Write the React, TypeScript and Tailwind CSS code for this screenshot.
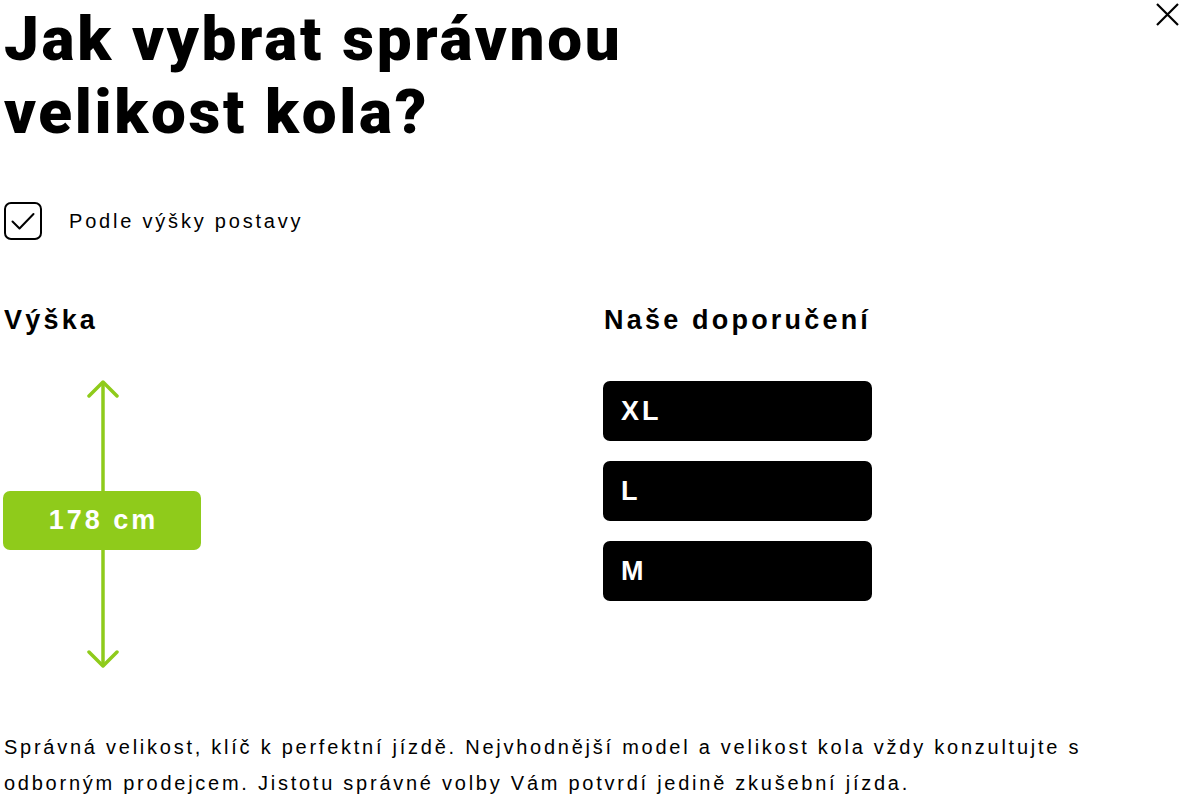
import React from "react";

export default function App() {
  return (
    <div className="relative w-[1179px] h-[806px] bg-white overflow-hidden text-black" style={{ fontFamily: "Roboto, 'Liberation Sans', sans-serif" }}>
      <button className="absolute right-0 top-[3px] w-[23px] h-[23px] flex items-center justify-center">
        <svg width="23" height="23" viewBox="0 0 23 23" fill="none" stroke="black" strokeWidth="2.2">
          <path d="M1 1 L22 22 M22 1 L1 22" />
        </svg>
      </button>
      <div className="pl-[4px]">
        <h1 className="text-[62px] leading-[73px] font-black tracking-[2.7px] pt-[2px] m-0">
          Jak vybrat správnou
          <br />
          velikost kola?
        </h1>
        <div className="mt-[54px] flex items-center">
          <div className="w-[38px] h-[38px] border-2 border-black rounded-[7px] flex items-center justify-center">
            <svg width="26" height="26" viewBox="0 0 26 26" fill="none" stroke="black" strokeWidth="2" strokeLinecap="round" strokeLinejoin="round">
              <path d="M2.5 13.5 L9.5 20.5 L23.5 6" />
            </svg>
          </div>
          <span className="ml-[27px] text-[20px] tracking-[2.8px]" style={{ fontFamily: "'Liberation Sans', Arial, sans-serif" }}>Podle výšky postavy</span>
        </div>
        <div className="mt-[65px] flex" style={{ fontFamily: "'Liberation Sans', Arial, sans-serif" }}>
          <div className="w-[600px]">
            <div className="text-[27px] font-bold tracking-[3.2px] leading-[30px]">Výška</div>
            <div className="mt-[44px] relative w-[198px] h-[290px] flex flex-col items-center">
              <svg width="32" height="290" viewBox="0 0 32 290" fill="none" stroke="#8fcb1b" strokeWidth="3.5" strokeLinecap="round" strokeLinejoin="round">
                <path d="M16 4 L16 286" />
                <path d="M2 17 L16 3 L30 17" />
                <path d="M2 273 L16 287 L30 273" />
              </svg>
              <div className="absolute left-[-1px] top-[112px] w-[198px] h-[59px] rounded-[7px] bg-[#8fcb1b] flex items-center justify-center text-white text-[27px] font-bold tracking-[3px] pl-[3px]">
                178 cm
              </div>
            </div>
          </div>
          <div className="flex flex-col">
            <div className="text-[27px] font-bold tracking-[3.2px] leading-[30px]">Naše doporučení</div>
            <div className="mt-[46px] flex flex-col gap-[20px] w-[269px] -ml-[1px]">
              {["XL", "L", "M"].map((s) => (
                <div key={s} className="h-[60px] rounded-[7px] bg-black text-white text-[27px] font-bold tracking-[3px] flex items-center pl-[18px]">
                  {s}
                </div>
              ))}
            </div>
          </div>
        </div>
        <p className="mt-[60px] text-[20px] leading-[36px] tracking-[2.75px] w-[1110px]" style={{ fontFamily: "'Liberation Sans', Arial, sans-serif" }}>
          Správná velikost, klíč k perfektní jízdě. Nejvhodnější model a velikost kola vždy konzultujte s odborným prodejcem. Jistotu správné volby Vám potvrdí jedině zkušební jízda.
        </p>
      </div>
    </div>
  );
}
